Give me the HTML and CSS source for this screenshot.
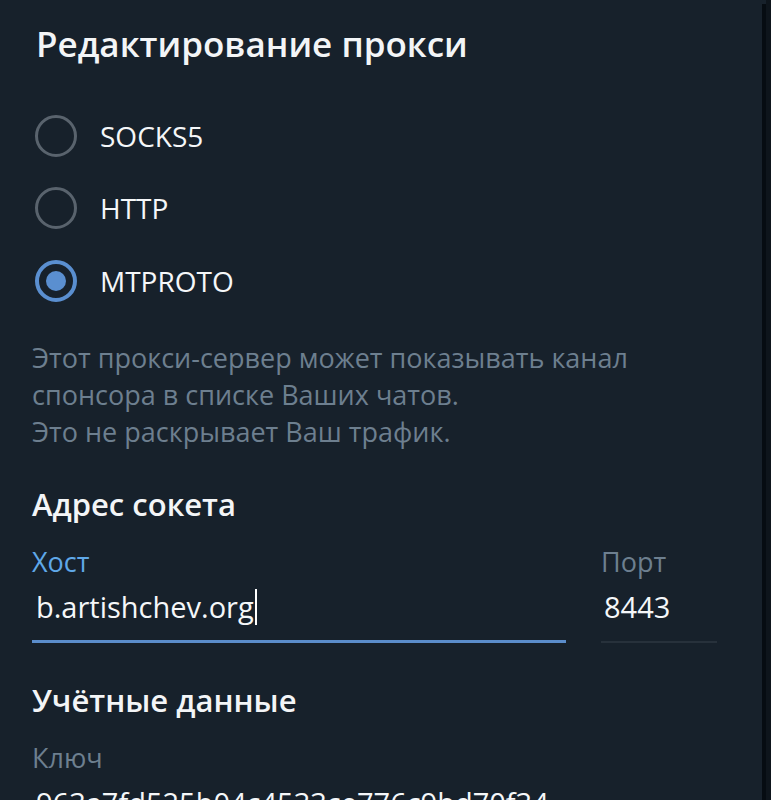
FILE: index.html
```html
<!DOCTYPE html>
<html lang="ru">
<head>
<meta charset="utf-8">
<title>Редактирование прокси</title>
<link rel="stylesheet" href="styles.css">
</head>
<body>
<div class="dialog">
  <h1 class="title">Редактирование прокси</h1>
  <div class="radios">
    <div class="radio"><span class="circle"></span><span class="radio-label">SOCKS5</span></div>
    <div class="radio"><span class="circle"></span><span class="radio-label">HTTP</span></div>
    <div class="radio checked"><span class="circle"></span><span class="radio-label">MTPROTO</span></div>
  </div>
  <p class="note">Этот прокси-сервер может показывать канал<br>спонсора в списке Ваших чатов.<br>Это не раскрывает Ваш трафик.</p>
  <h2 class="section">Адрес сокета</h2>
  <div class="fields">
    <div class="field host">
      <div class="field-label active">Хост</div>
      <div class="field-value focused">b.artishchev.org<span class="cursor"></span></div>
    </div>
    <div class="field port">
      <div class="field-label">Порт</div>
      <div class="field-value">8443</div>
    </div>
  </div>
  <h2 class="section section-creds">Учётные данные</h2>
  <div class="field key">
    <div class="field-label">Ключ</div>
    <div class="field-value">963a7fd525b04c4533ce776c9bd70f34</div>
  </div>
</div>
<div class="edge"><div class="edge-inner"></div><div class="edge-outer"></div></div>
</body>
</html>
```

FILE: styles.css
```css
* {
  box-sizing: border-box;
  margin: 0;
  padding: 0;
}

html, body {
  height: 100%;
}

body {
  background: #17212b;
  font-family: "Open Sans", "Noto Sans", sans-serif;
  color: #ffffff;
  display: flex;
  overflow: hidden;
}

.dialog {
  flex: 1;
  padding: 22px 44px 0 32px;
}

.edge {
  width: 9px;
  display: flex;
}

.edge-inner {
  width: 4px;
  margin-top: 4px;
  background: #060c12;
}

.edge-outer {
  flex: 1;
  background: #0e151c;
}

.title {
  font-size: 35px;
  font-weight: 600;
  line-height: 44px;
  padding-left: 4px;
  color: #f3f5f7;
}

.radios {
  margin-top: 34px;
  display: flex;
  flex-direction: column;
}

.radio {
  height: 72px;
  display: flex;
  align-items: center;
  gap: 23px;
  padding-left: 3px;
  font-size: 28px;
  color: #f5f7f9;
}

.radio:last-child {
  height: 73px;
  padding-top: 1px;
}

.circle {
  width: 42px;
  height: 42px;
  border-radius: 50%;
  border: 3px solid #59636d;
  display: flex;
  align-items: center;
  justify-content: center;
}

.radio.checked .circle {
  border: 4px solid #5a8fd0;
}

.radio.checked .circle::after {
  content: "";
  width: 20px;
  height: 20px;
  border-radius: 50%;
  background: #5a8fd0;
}

.note {
  margin-top: 22px;
  font-size: 27px;
  line-height: 37px;
  color: #6d7f8f;
}

.section {
  margin-top: 34px;
  font-size: 31px;
  font-weight: 600;
  line-height: 40px;
  color: #f3f5f7;
}

.section-creds {
  margin-top: 37px;
}

.fields {
  display: flex;
  gap: 35px;
  margin-top: 22px;
}

.field.host {
  width: 534px;
}

.field.port {
  width: 116px;
}

.field.key {
  margin-top: 22px;
}

.field-label {
  font-size: 27px;
  line-height: 32px;
  color: #6d7f8f;
}

.field-label.active {
  color: #5fa8e8;
}

.field-value {
  margin-top: 11px;
  font-size: 29px;
  line-height: 36px;
  padding-left: 4px;
  color: #f5f7f9;
}

.field.host .field-value,
.field.port .field-value {
  padding-bottom: 15px;
  border-bottom: 3px solid #27313b;
}

.field.port .field-value {
  padding-bottom: 16px;
  border-bottom-width: 2px;
  padding-left: 3px;
}

.field.host .field-value.focused {
  border-bottom-color: #5b8dcb;
}

.cursor {
  display: inline-block;
  width: 2px;
  height: 36px;
  margin-left: 1px;
  vertical-align: top;
  background: #ffffff;
}
```
